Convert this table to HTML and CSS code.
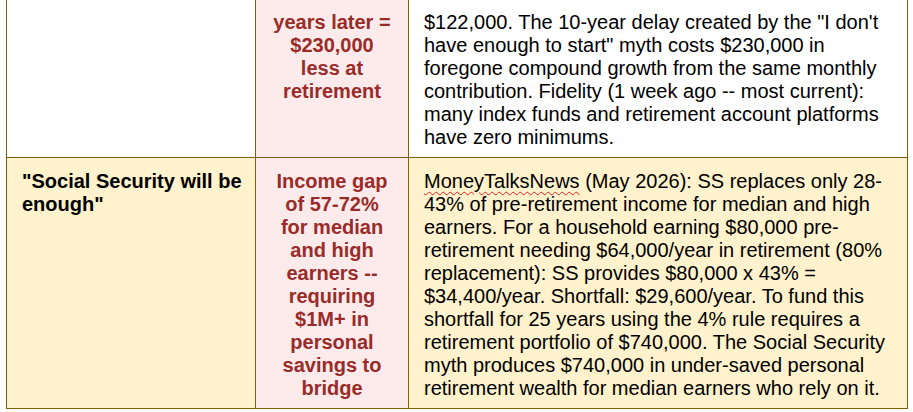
FILE: index.html
```html
<!DOCTYPE html>
<html lang="en">
<head>
<meta charset="utf-8">
<title>Retirement myths</title>
<link rel="stylesheet" href="styles.css">
</head>
<body>
<table class="myths">
  <colgroup>
    <col class="c-myth">
    <col class="c-cost">
    <col class="c-evidence">
  </colgroup>
  <tbody>
    <tr class="row-plain">
      <td class="myth first"></td>
      <td class="cost first">years later =<br>$230,000<br>less at<br>retirement</td>
      <td class="evidence first">$122,000. The 10-year delay created by the "I don't have enough to start" myth costs $230,000 in foregone compound growth from the same monthly contribution. Fidelity (1 week ago -- most current): many index funds and retirement account platforms have zero minimums.</td>
    </tr>
    <tr class="row-alt">
      <td class="myth">"Social Security will be enough"</td>
      <td class="cost">Income gap of 57-72% for median and high earners&nbsp;-- requiring $1M+ in personal savings to bridge</td>
      <td class="evidence"><span class="spell">MoneyTalksNews</span> (May 2026): SS replaces only 28-43% of pre-retirement income for median and high earners. For a household earning $80,000 pre-retirement needing $64,000/year in retirement (80% replacement): SS provides $80,000 x 43% = $34,400/year. Shortfall: $29,600/year. To fund this shortfall for 25 years using the 4% rule requires a retirement portfolio of $740,000. The Social Security myth produces $740,000 in under-saved personal retirement wealth for median earners who rely on it.</td>
    </tr>
  </tbody>
</table>
</body>
</html>
```

FILE: styles.css
```css
html, body {
  margin: 0;
  padding: 0;
  background: #ffffff;
}

body {
  font-family: "Liberation Sans", Arial, sans-serif;
  font-size: 20px;
  line-height: 23px;
  color: #000000;
}

.myths {
  margin-left: 6px;
  width: 901px;
  border-collapse: collapse;
  table-layout: fixed;
}

.c-myth { width: 249px; }
.c-cost { width: 153px; }
.c-evidence { width: 499px; }

.myths td {
  border: 1px solid #7f6000;
  vertical-align: top;
  padding: 12px 15px 8px 15px;
}

.myths td.first {
  border-top: none;
  padding-top: 11px;
}

.row-plain .myth,
.row-plain .evidence {
  background: #ffffff;
}

.row-alt .myth,
.row-alt .evidence {
  background: #fff2cc;
}

.myths td.cost {
  background: #fdebeb;
  color: #9a2b29;
  font-weight: bold;
  text-align: center;
}

.myths td.myth {
  font-weight: bold;
  padding-right: 6px;
}

.spell {
  text-decoration: underline wavy #e0201e;
  text-decoration-thickness: 1px;
  text-underline-offset: 3px;
}
```
